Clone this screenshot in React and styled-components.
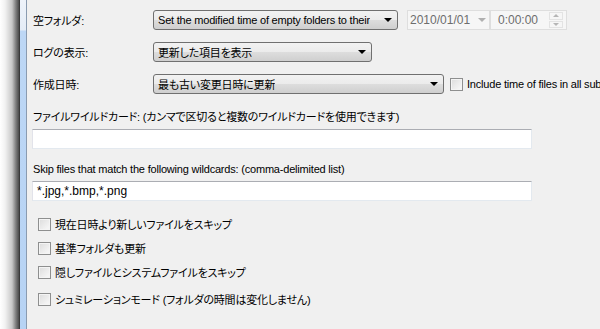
import styled, { createGlobalStyle } from "styled-components";

const Global = createGlobalStyle`
  html, body {
    margin: 0;
    padding: 0;
    background: #f0f0f0;
    overflow: hidden;
  }
  body {
    font-family: "Liberation Sans", "Noto Sans CJK JP", sans-serif;
    font-size: 11px;
    letter-spacing: -0.2px;
    font-feature-settings: "palt";
    color: #000;
  }
`;

const Window = styled.div`
  display: flex;
  width: 600px;
  height: 329px;
  overflow: hidden;
`;

const Shadow = styled.div`
  width: 19px;
  flex: none;
  background: linear-gradient(to right, #ffffff 0, #f2f2f2 5px, #c8c8c8 12px, #7c7c7c 16px, #4a4a4a 19px);
`;

const Edge = styled.div`
  width: 1px;
  flex: none;
  background: #3a3a3a;
`;

const Strip = styled.div`
  width: 6px;
  flex: none;
  background: linear-gradient(to bottom, #eef3fa 0, #e4ecf6 30px, #bdd7f5 31px, #b7d3f4 100%);
  border-right: 1px solid #8a9bb0;
`;

const Panel = styled.div`
  flex: 1;
  display: flex;
  flex-direction: column;
  padding: 10px 0 0 5px;
  white-space: nowrap;
`;

const Row = styled.div`
  display: flex;
  align-items: center;
  height: 20px;
  margin-bottom: ${(p) => p.$gap ?? 12}px;
`;

const Label = styled.div`
  width: 120px;
  flex: none;
  padding-left: 1px;
`;

const Select = styled.div`
  box-sizing: border-box;
  width: ${(p) => p.$width}px;
  height: 20px;
  flex: none;
  display: flex;
  align-items: center;
  justify-content: space-between;
  padding: 0 5px 0 4px;
  border: 1px solid #707070;
  border-radius: 3px;
  background: linear-gradient(to bottom, #f2f2f2 0, #ebebeb 50%, #dddddd 51%, #cfcfcf 100%);
  overflow: hidden;
`;

const SelectText = styled.span`
  overflow: hidden;
  white-space: nowrap;
`;

const Arrow = styled.span`
  flex: none;
  width: 0;
  height: 0;
  margin-left: 6px;
  border-left: 4px solid transparent;
  border-right: 4px solid transparent;
  border-top: 4px solid ${(p) => p.$color || "#000"};
`;

const DateBox = styled.div`
  box-sizing: border-box;
  display: flex;
  align-items: center;
  justify-content: space-between;
  width: ${(p) => p.$width}px;
  height: 20px;
  margin-left: ${(p) => p.$left || 0}px;
  padding: 0 3px 0 ${(p) => p.$pad || 2}px;
  background: #f6f6f6;
  border: 1px solid #dedede;
  color: #6d6d6d;
  font-family: "Liberation Sans", sans-serif;
  font-size: 12px;
  letter-spacing: 0;
`;

const Spin = styled.div`
  display: flex;
  flex-direction: column;
  gap: 1px;
  width: 14px;
  height: 16px;
`;

const SpinPart = styled.div`
  flex: 1;
  display: flex;
  align-items: center;
  justify-content: center;
  border: 1px solid #e3e3e3;
  &::after {
    content: "";
    border-left: 3px solid transparent;
    border-right: 3px solid transparent;
    ${(p) => (p.$up ? "border-bottom" : "border-top")}: 3px solid #b5b5b5;
  }
`;

const Check = styled.span`
  box-sizing: border-box;
  flex: none;
  width: 13px;
  height: 13px;
  border: 1px solid #8e8f8f;
  background: linear-gradient(135deg, #dcdcdc 0, #f4f4f4 80%);
  box-shadow: inset 0 0 0 1px #f4f4f4;
`;

const CheckRow = styled.div`
  display: flex;
  align-items: center;
  gap: 4px;
  height: 16px;
  margin-left: ${(p) => p.$left || 0}px;
  margin-bottom: ${(p) => p.$gap || 0}px;
`;

const Caption = styled.div`
  height: 14px;
  line-height: 14px;
  padding-left: 1px;
  margin: ${(p) => p.$top}px 0 5px;
`;

const TextField = styled.div`
  box-sizing: border-box;
  width: 500px;
  height: 20px;
  padding: 0 4px;
  line-height: 18px;
  background: #fff;
  border: 1px solid #e3e9ef;
  border-top-color: #abadb3;
  border-left-color: #e2e3ea;
  font-size: 12px;
  letter-spacing: 0;
`;

const Checks = styled.div`
  display: flex;
  flex-direction: column;
  padding-left: 6px;
  margin-top: 15px;
`;

export default function App() {
  return (
    <Window>
      <Global />
      <Shadow />
      <Edge />
      <Strip />
      <Panel>
        <Row>
          <Label>空フォルダ:</Label>
          <Select $width={245}>
            <SelectText>Set the modified time of empty folders to their</SelectText>
            <Arrow />
          </Select>
          <DateBox $width={83} $left={9}>
            2010/01/01
            <Arrow $color="#b0b0b0" />
          </DateBox>
          <DateBox $width={77} $pad={7}>
            0:00:00
            <Spin>
              <SpinPart $up />
              <SpinPart />
            </Spin>
          </DateBox>
        </Row>
        <Row>
          <Label>ログの表示:</Label>
          <Select $width={219}>
            <SelectText>更新した項目を表示</SelectText>
            <Arrow />
          </Select>
        </Row>
        <Row $gap={0}>
          <Label>作成日時:</Label>
          <Select $width={291}>
            <SelectText>最も古い変更日時に更新</SelectText>
            <Arrow />
          </Select>
          <CheckRow $left={6}>
            <Check />
            Include time of files in all subfolders
          </CheckRow>
        </Row>
        <Caption $top={16}>ファイルワイルドカード: (カンマで区切ると複数のワイルドカードを使用できます)</Caption>
        <TextField />
        <Caption $top={13}>Skip files that match the following wildcards: (comma-delimited list)</Caption>
        <TextField>*.jpg,*.bmp,*.png</TextField>
        <Checks>
          <CheckRow $gap={8}>
            <Check />
            現在日時より新しいファイルをスキップ
          </CheckRow>
          <CheckRow $gap={8}>
            <Check />
            基準フォルダも更新
          </CheckRow>
          <CheckRow $gap={11}>
            <Check />
            隠しファイルとシステムファイルをスキップ
          </CheckRow>
          <CheckRow>
            <Check />
            シュミレーションモード (フォルダの時間は変化しません)
          </CheckRow>
        </Checks>
      </Panel>
    </Window>
  );
}
